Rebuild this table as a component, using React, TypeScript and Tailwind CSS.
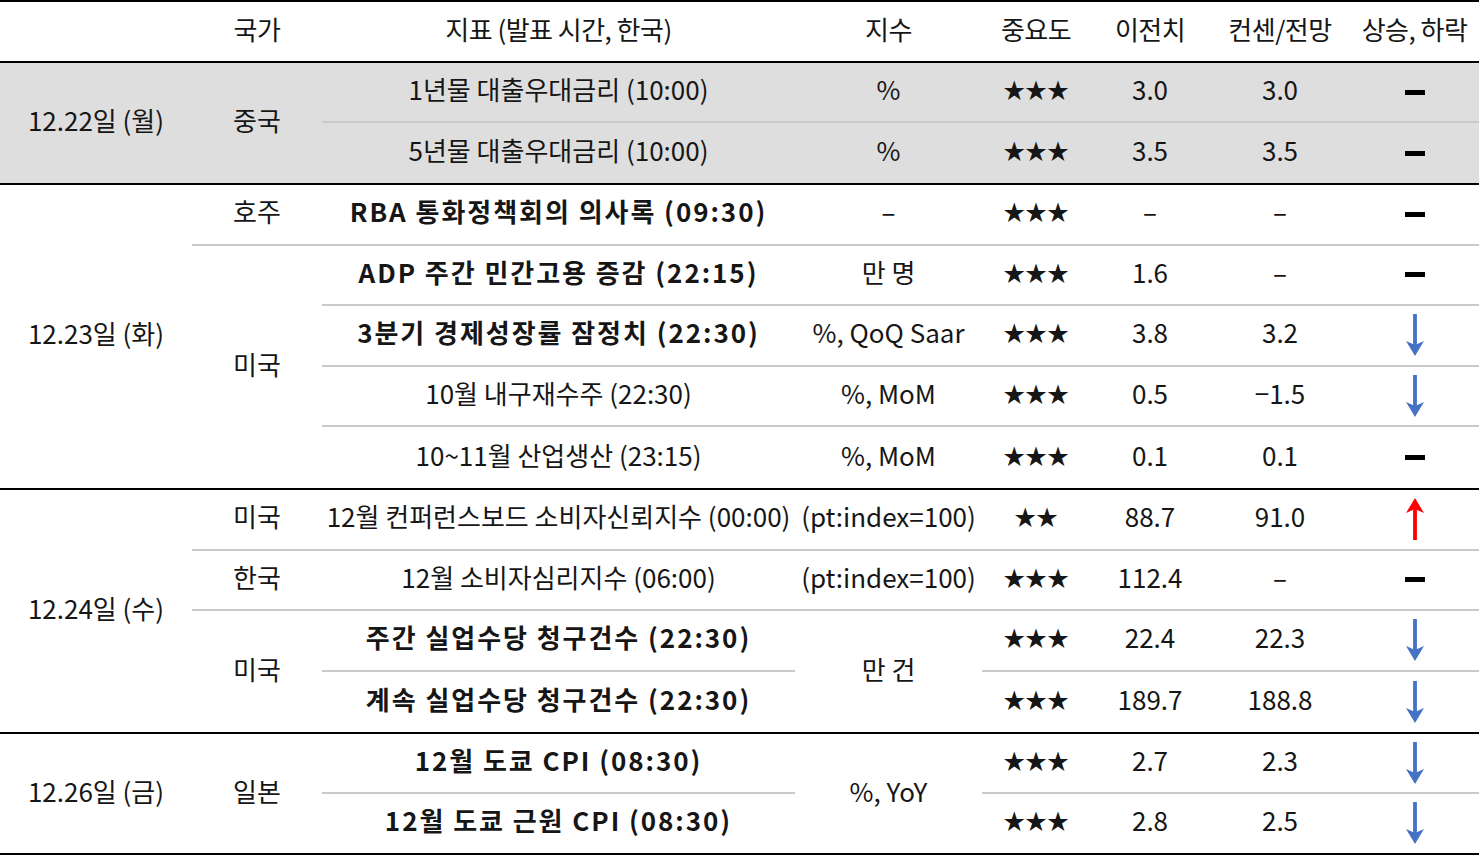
import type { ReactNode } from "react";

const cols = "grid grid-cols-[192px_130px_473px_187px_108px_120px_140px_129px]";
const line = "border-b-2 border-[#c9c9c9]";

type Trend = "up" | "down" | "flat";

function Arrow({ dir }: { dir: "up" | "down" }) {
  const color = dir === "up" ? "#ff0000" : "#4472c4";
  return (
    <svg width="18" height="42" viewBox="0 0 18 42" className={dir === "up" ? "rotate-180" : ""}>
      <rect x="7.1" y="0" width="3.8" height="33" fill={color} />
      <path d="M0 27 L9 42 L18 27 L9 31 Z" fill={color} />
    </svg>
  );
}

function TrendMark({ trend }: { trend: Trend }) {
  if (trend === "flat") return <div className="h-[5px] w-[20px] bg-black" />;
  return <Arrow dir={trend} />;
}

function Cell({ className = "", children }: { className?: string; children?: ReactNode }) {
  return (
    <div className={`flex items-center justify-center whitespace-nowrap pb-[7px] ${className}`}>{children}</div>
  );
}

type Row = {
  name: string;
  bold?: boolean;
  unit?: string;
  stars: string;
  prev: string;
  cons: string;
  trend: Trend;
};

function DataCells({ row, last, noUnit }: { row: Row; last?: boolean; noUnit?: boolean }) {
  const b = last ? "" : line;
  return (
    <>
      <Cell className={`col-start-3 ${b} ${row.bold ? "font-bold tracking-[0.075em]" : ""}`}>{row.name}</Cell>
      {!noUnit && <Cell className={`col-start-4 ${b}`}>{row.unit}</Cell>}
      <Cell className={`col-start-5 ${b} text-[22px] tracking-[-0.01em]`}>{row.stars}</Cell>
      <Cell className={`col-start-6 ${b}`}>{row.prev}</Cell>
      <Cell className={`col-start-7 ${b}`}>{row.cons}</Cell>
      <div className={`col-start-8 flex items-center justify-center ${b}`}>
        <TrendMark trend={row.trend} />
      </div>
    </>
  );
}

export default function App() {
  return (
    <div className="w-[1479px] bg-white font-['Noto_Sans_CJK_KR',sans-serif] text-[26px] text-[#161616]">
      {/* header */}
      <div className={`${cols} h-[61px] border-t-2 border-black tracking-[-0.02em]`}>
        <Cell />
        <Cell>국가</Cell>
        <Cell>지표 (발표 시간, 한국)</Cell>
        <Cell>지수</Cell>
        <Cell>중요도</Cell>
        <Cell>이전치</Cell>
        <Cell>컨센/전망</Cell>
        <Cell>상승, 하락</Cell>
      </div>

      {/* 12.22 */}
      <div className={`${cols} h-[122px] grid-rows-2 border-t-2 border-black bg-[#dedede]`}>
        <Cell className="col-start-1 row-span-2 row-start-1">12.22일 (월)</Cell>
        <Cell className="col-start-2 row-span-2 row-start-1">중국</Cell>
        <div className="contents [&>*]:row-start-1">
          <DataCells row={{ name: "1년물 대출우대금리 (10:00)", unit: "%", stars: "★★★", prev: "3.0", cons: "3.0", trend: "flat" }} />
        </div>
        <div className="contents [&>*]:row-start-2">
          <DataCells last row={{ name: "5년물 대출우대금리 (10:00)", unit: "%", stars: "★★★", prev: "3.5", cons: "3.5", trend: "flat" }} />
        </div>
      </div>

      {/* 12.23 */}
      <div className={`${cols} h-[305px] grid-rows-5 border-t-2 border-black`}>
        <Cell className="col-start-1 row-span-5 row-start-1">12.23일 (화)</Cell>
        <Cell className={`col-start-2 row-start-1 ${line}`}>호주</Cell>
        <Cell className="col-start-2 row-span-4 row-start-2">미국</Cell>
        <div className="contents [&>*]:row-start-1">
          <DataCells row={{ name: "RBA 통화정책회의 의사록 (09:30)", bold: true, unit: "–", stars: "★★★", prev: "–", cons: "–", trend: "flat" }} />
        </div>
        <div className="contents [&>*]:row-start-2">
          <DataCells row={{ name: "ADP 주간 민간고용 증감 (22:15)", bold: true, unit: "만 명", stars: "★★★", prev: "1.6", cons: "–", trend: "flat" }} />
        </div>
        <div className="contents [&>*]:row-start-3">
          <DataCells row={{ name: "3분기 경제성장률 잠정치 (22:30)", bold: true, unit: "%, QoQ Saar", stars: "★★★", prev: "3.8", cons: "3.2", trend: "down" }} />
        </div>
        <div className="contents [&>*]:row-start-4">
          <DataCells row={{ name: "10월 내구재수주 (22:30)", unit: "%, MoM", stars: "★★★", prev: "0.5", cons: "−1.5", trend: "down" }} />
        </div>
        <div className="contents [&>*]:row-start-5">
          <DataCells last row={{ name: "10~11월 산업생산 (23:15)", unit: "%, MoM", stars: "★★★", prev: "0.1", cons: "0.1", trend: "flat" }} />
        </div>
      </div>

      {/* 12.24 */}
      <div className={`${cols} h-[244px] grid-rows-4 border-t-2 border-black`}>
        <Cell className="col-start-1 row-span-4 row-start-1">12.24일 (수)</Cell>
        <Cell className={`col-start-2 row-start-1 ${line}`}>미국</Cell>
        <Cell className={`col-start-2 row-start-2 ${line}`}>한국</Cell>
        <Cell className="col-start-2 row-span-2 row-start-3">미국</Cell>
        <div className="contents [&>*]:row-start-1">
          <DataCells row={{ name: "12월 컨퍼런스보드 소비자신뢰지수 (00:00)", unit: "(pt:index=100)", stars: "★★", prev: "88.7", cons: "91.0", trend: "up" }} />
        </div>
        <div className="contents [&>*]:row-start-2">
          <DataCells row={{ name: "12월 소비자심리지수 (06:00)", unit: "(pt:index=100)", stars: "★★★", prev: "112.4", cons: "–", trend: "flat" }} />
        </div>
        <Cell className="col-start-4 row-span-2 row-start-3">만 건</Cell>
        <div className="contents [&>*]:row-start-3">
          <DataCells noUnit row={{ name: "주간 실업수당 청구건수 (22:30)", bold: true, stars: "★★★", prev: "22.4", cons: "22.3", trend: "down" }} />
        </div>
        <div className="contents [&>*]:row-start-4">
          <DataCells noUnit last row={{ name: "계속 실업수당 청구건수 (22:30)", bold: true, stars: "★★★", prev: "189.7", cons: "188.8", trend: "down" }} />
        </div>
      </div>

      {/* 12.26 */}
      <div className={`${cols} h-[123px] grid-rows-2 border-y-2 border-black`}>
        <Cell className="col-start-1 row-span-2 row-start-1">12.26일 (금)</Cell>
        <Cell className="col-start-2 row-span-2 row-start-1">일본</Cell>
        <Cell className="col-start-4 row-span-2 row-start-1">%, YoY</Cell>
        <div className="contents [&>*]:row-start-1">
          <DataCells noUnit row={{ name: "12월 도쿄 CPI (08:30)", bold: true, stars: "★★★", prev: "2.7", cons: "2.3", trend: "down" }} />
        </div>
        <div className="contents [&>*]:row-start-2">
          <DataCells noUnit last row={{ name: "12월 도쿄 근원 CPI (08:30)", bold: true, stars: "★★★", prev: "2.8", cons: "2.5", trend: "down" }} />
        </div>
      </div>
    </div>
  );
}
